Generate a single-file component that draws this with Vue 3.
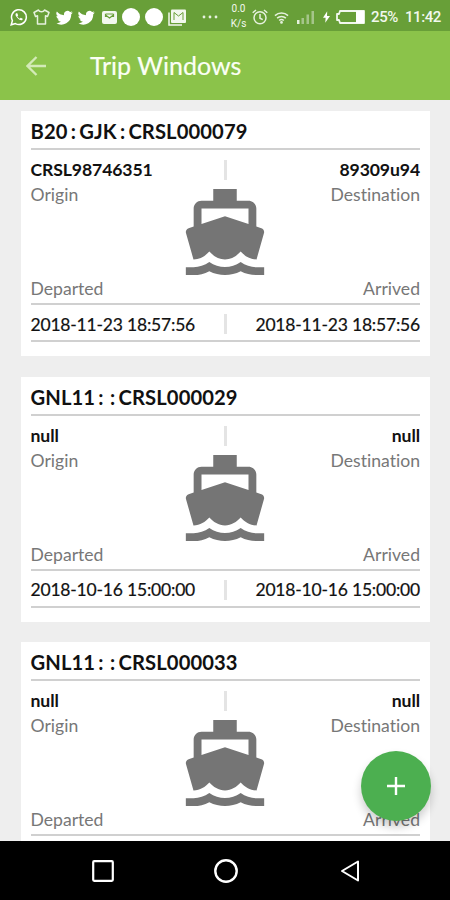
<script setup>
import { ref } from "vue"

const trips = ref([
  {
    title: "B20 : GJK : CRSL000079",
    origin: "CRSL98746351",
    destination: "89309u94",
    departed: "2018-11-23 18:57:56",
    arrived: "2018-11-23 18:57:56",
  },
  {
    title: "GNL11 :  : CRSL000029",
    origin: "null",
    destination: "null",
    departed: "2018-10-16 15:00:00",
    arrived: "2018-10-16 15:00:00",
  },
  {
    title: "GNL11 :  : CRSL000033",
    origin: "null",
    destination: "null",
  },
])
</script>

<template>
  <div class="screen">
    <div class="status">
      <div class="notifications">
        <svg width="18" height="18" viewBox="0 0 18 18" fill="none" stroke="#fff" stroke-width="1.5">
          <path d="M1.2 16.8l1.2-4.2A7.4 7.4 0 1 1 5.4 15.6z" />
          <path d="M6 5.2c-1 1-.6 2.7 1.5 4.9s4 2.8 5 1.7l.2-1-2-1-1 .9c-1-.4-1.9-1.3-2.4-2.4l.9-.9-.9-2.2z" fill="#fff" stroke="none" />
        </svg>
        <svg class="shirt" width="17" height="16" viewBox="0 0 17 16" fill="none" stroke="#e6f1de" stroke-width="1.5" stroke-linejoin="round">
          <path d="M5.5 1L1 3.5l1.5 4 2-.8V15h8V6.7l2 .8 1.5-4L11.5 1c-1 2.4-5 2.4-6 0z" />
        </svg>
        <svg v-for="n in 2" :key="n" width="17" height="17" viewBox="0 0 24 24" fill="#fff">
          <path d="M23.6 4.9a9.7 9.7 0 0 1-2.8.8 4.9 4.9 0 0 0 2.1-2.7c-.9.5-2 1-3.1 1.2a4.9 4.9 0 0 0-8.4 4.5A14 14 0 0 1 1.3 3.5a4.9 4.9 0 0 0 1.5 6.6c-.8 0-1.6-.3-2.2-.6a4.9 4.9 0 0 0 3.9 4.9c-.7.2-1.5.2-2.2.1a4.9 4.9 0 0 0 4.6 3.4A9.9 9.9 0 0 1 0 19.9a14 14 0 0 0 21.5-12.4c.8-.7 1.5-1.6 2.1-2.6z" />
        </svg>
        <svg class="mail" width="15" height="13" viewBox="0 0 15 13">
          <rect width="15" height="13" rx="2" fill="#f2f8ee" />
          <path d="M3.5 6V4l4 3 4-3v2M3.5 3h8" fill="none" stroke="#689f38" stroke-width="1.2" />
        </svg>
        <span class="dot"></span>
        <span class="dot"></span>
        <svg width="18" height="17" viewBox="0 0 18 17">
          <path d="M1 3.5V16h13" fill="none" stroke="#f2f8ee" stroke-width="1.5" />
          <rect x="3" y="0.5" width="15" height="13.5" rx="1" fill="#f2f8ee" />
          <path d="M6 11V3.5l4.5 3.5L15 3.5V11" fill="none" stroke="#689f38" stroke-width="1" />
        </svg>
        <svg class="more" width="16" height="4" viewBox="0 0 16 4" fill="#e6f1de">
          <circle cx="2" cy="2" r="1.4" />
          <circle cx="8" cy="2" r="1.4" />
          <circle cx="14" cy="2" r="1.4" />
        </svg>
      </div>
      <div class="system">
        <div class="speed"><span>0.0</span><span>K/s</span></div>
        <svg class="alarm" width="16" height="16" viewBox="0 0 16 16" fill="none" stroke="#e6f1de" stroke-width="1.5">
          <circle cx="8" cy="8.8" r="6" />
          <path d="M8 5v4.2l2.7 1.5M.7 3.8L4 1M15.3 3.8L12 1" />
        </svg>
        <svg class="wifi" width="15" height="13" viewBox="0 0 16 13" fill="none" stroke="#e6f1de" stroke-width="1.6">
          <path d="M1 4.5a10.5 10.5 0 0 1 14 0M3.3 7.2a7 7 0 0 1 9.4 0M5.5 9.7a3.8 3.8 0 0 1 5 0" />
          <circle cx="8" cy="11.7" r="0.7" />
        </svg>
        <svg class="signal" width="19" height="14" viewBox="0 0 19 14">
          <path d="M1 10h2.5v4H1z" fill="#e6f1de" />
          <path d="M5.5 8H8v6H5.5zM10.5 4.5H13V14h-2.5zM15.5 1H18v13h-2.5z" fill="#a5c58a" />
        </svg>
        <svg class="bolt" width="7" height="12" viewBox="0 0 8 13" fill="#fff">
          <path d="M4.8 0L0 7.3h3L2.6 13 8 5.3H4.6z" />
        </svg>
        <svg class="battery" width="29" height="14" viewBox="0 0 29 14">
          <path d="M4 1h24v12H4L3 10H1V4h2z" fill="none" stroke="#f2f8ee" stroke-width="1.8" stroke-linejoin="round" />
          <path d="M20 1h8v12h-8z" fill="#fff" />
        </svg>
        <span class="percent">25%</span>
        <span class="clock">11:42</span>
      </div>
    </div>

    <div class="toolbar">
      <svg width="20" height="20" viewBox="0 0 20 20" fill="none" stroke="#d3eab7" stroke-width="2.3">
        <path d="M20 10H2M10.5 1L1.5 10l9 9" />
      </svg>
      <h1>Trip Windows</h1>
    </div>

    <div class="list">
      <div v-for="trip in trips" :key="trip.title" class="card">
        <div class="title">{{ trip.title }}</div>
        <div class="route">
          <div class="side">
            <strong>{{ trip.origin }}</strong>
            <span>Origin</span>
            <span class="bottom">Departed</span>
          </div>
          <div class="middle">
            <i class="tick"></i>
            <svg width="94" height="94" viewBox="0 0 24 24" fill="#757575">
              <path d="M20 21c-1.39 0-2.78-.47-4-1.32-2.44 1.71-5.56 1.71-8 0C6.78 20.53 5.39 21 4 21H2v2h2c1.38 0 2.74-.35 4-.99 2.52 1.29 5.48 1.29 8 0 1.26.65 2.62.99 4 .99h2v-2h-2zM3.95 19H4c1.6 0 3.02-.88 4-2 .98 1.12 2.4 2 4 2s3.02-.88 4-2c.98 1.12 2.4 2 4 2h.05l1.89-6.68c.08-.26.06-.54-.06-.78s-.34-.42-.6-.5L20 10.62V6c0-1.1-.9-2-2-2h-3V1H9v3H6c-1.1 0-2 .9-2 2v4.62l-1.29.42c-.26.08-.48.26-.6.5s-.15.52-.06.78L3.95 19zM6 6h12v3.97L12 8 6 9.97V6z" />
            </svg>
          </div>
          <div class="side right">
            <strong>{{ trip.destination }}</strong>
            <span>Destination</span>
            <span class="bottom">Arrived</span>
          </div>
        </div>
        <div v-if="trip.departed" class="dates">
          <span>{{ trip.departed }}</span>
          <i class="tick"></i>
          <span>{{ trip.arrived }}</span>
        </div>
      </div>
    </div>

    <button class="fab">
      <svg width="20" height="20" viewBox="0 0 20 20" stroke="#fff" stroke-width="2.4">
        <path d="M10 1v18M1 10h18" />
      </svg>
    </button>

    <div class="navbar">
      <svg width="22" height="22" viewBox="0 0 22 22" fill="none" stroke="#fff" stroke-width="2.2">
        <rect x="1.2" y="1.2" width="19.6" height="19.6" rx="1" />
      </svg>
      <svg class="home" width="24" height="24" viewBox="0 0 24 24" fill="none" stroke="#fff" stroke-width="2.4">
        <circle cx="12" cy="12" r="10.7" />
      </svg>
      <svg width="20" height="22" viewBox="0 0 20 22" fill="none" stroke="#fff" stroke-width="2" stroke-linejoin="round">
        <path d="M18 1.5v19L2 11z" />
      </svg>
    </div>
  </div>
</template>

<style>
body {
  margin: 0;
}
</style>

<style scoped>
.screen {
  position: relative;
  display: flex;
  flex-direction: column;
  width: 450px;
  height: 900px;
  overflow: hidden;
  background-color: #eee;
  font-family: Lato, "Liberation Sans", sans-serif;
  font-variant-ligatures: none;
}

svg {
  display: block;
  flex: none;
}

.status {
  display: flex;
  align-items: center;
  justify-content: space-between;
  height: 31px;
  flex: none;
  padding: 3px 9px 0 10px;
  box-sizing: border-box;
  background-color: #689f38;
  color: #f2f8ee;
  font-family: Roboto, sans-serif;
}

.notifications,
.system {
  display: flex;
  align-items: center;
}
.notifications {
  gap: 5px;
}
.shirt {
  margin-right: 1px;
}
.mail {
  margin-left: 2px;
}
.dot {
  width: 18px;
  height: 18px;
  border-radius: 50%;
  background-color: #fff;
}
.more {
  margin-left: 11px;
}

.speed {
  display: flex;
  flex-direction: column;
  align-items: center;
  width: 17px;
  margin-top: -3px;
  font-size: 10px;
  line-height: 15px;
}
.alarm {
  margin-left: 5px;
}
.wifi {
  margin-left: 6px;
}
.signal {
  margin-left: 7px;
}
.bolt {
  margin-left: 8px;
}
.battery {
  margin-left: 6px;
}
.percent,
.clock {
  margin-left: 6px;
  font-size: 15px;
  font-weight: 500;
  letter-spacing: -0.4px;
}
.clock {
  margin-left: 7px;
}

.toolbar {
  display: flex;
  align-items: center;
  height: 69px;
  flex: none;
  padding: 0 26px;
  gap: 44px;
  background-color: #8bc34a;
}
h1 {
  margin: 0 0 2px;
  color: #fbfff5;
  font-size: 25px;
  font-weight: 400;
  -webkit-text-stroke: 0.2px #fbfff5;
}

.list {
  display: flex;
  flex-direction: column;
  gap: 20.5px;
  flex: 1;
  min-height: 0;
  padding: 11px 20px 0 20.5px;
  overflow: hidden;
}
.card {
  height: 245px;
  flex: none;
  padding: 0 10px;
  box-sizing: border-box;
  background-color: white;
}
.title {
  height: 39px;
  box-sizing: border-box;
  border-bottom: 2px solid #d0d0d0;
  font-size: 20.2px;
  font-weight: 700;
  line-height: 41px;
  letter-spacing: 0.1px;
  word-spacing: -1.8px;
  white-space: pre;
  color: #111;
}
.route {
  display: flex;
  justify-content: space-between;
  height: 155px;
  box-sizing: border-box;
  border-bottom: 2px solid #d0d0d0;
}
.side {
  display: flex;
  flex-direction: column;
  width: 148px;
  padding-top: 7px;
  font-size: 17.6px;
  line-height: 25px;
  color: #777;
}
.side strong {
  letter-spacing: -0.1px;
  color: #111;
}
.side .bottom {
  margin-top: 69px;
}
.right {
  align-items: flex-end;
}
.middle {
  display: flex;
  flex-direction: column;
  align-items: center;
  padding-top: 10px;
}
.middle svg {
  margin-top: 5px;
}
.tick {
  width: 3px;
  height: 20px;
  flex: none;
  background-color: #e4e4e4;
}
.dates {
  display: flex;
  align-items: center;
  justify-content: space-between;
  height: 37px;
  box-sizing: border-box;
  padding-top: 3px;
  border-bottom: 2px solid #d0d0d0;
  font-size: 17.5px;
  letter-spacing: -0.2px;
  color: #111;
  -webkit-text-stroke: 0.2px #111;
}

.fab {
  position: absolute;
  right: 19.5px;
  top: 750.5px;
  display: flex;
  align-items: center;
  justify-content: center;
  width: 70px;
  height: 70px;
  padding: 0;
  border: none;
  border-radius: 50%;
  background-color: #4caf50;
  box-shadow: 0 6px 10px rgba(0, 0, 0, 0.2);
}

.navbar {
  display: flex;
  align-items: center;
  justify-content: space-between;
  height: 59px;
  flex: none;
  padding: 0 90px 0 92px;
  box-sizing: border-box;
  background-color: #000;
}
.home {
  margin-right: 3px;
}
</style>
